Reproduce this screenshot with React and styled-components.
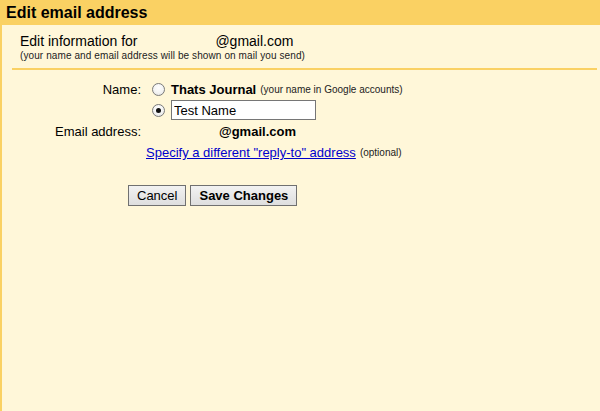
import React, { useState } from 'react';
import styled, { createGlobalStyle } from 'styled-components';

const GlobalStyle = createGlobalStyle`
  html, body {
    margin: 0;
    padding: 0;
    background: #fff7d9;
    font-family: "Liberation Sans", Arial, sans-serif;
    color: #000;
  }
`;

const Page = styled.div`
  width: 600px;
  height: 411px;
  display: flex;
  flex-direction: column;
  background: #fff7d9;
  overflow: hidden;
`;

const TitleBar = styled.div`
  height: 25px;
  flex: none;
  display: flex;
  align-items: center;
  padding-left: 6px;
  background: #fad163;
  font-size: 16px;
  font-weight: bold;
`;

const Body = styled.div`
  flex: 1;
  border-left: 2px solid #fad163;
  padding-top: 8px;
`;

const InfoHead = styled.div`
  padding-left: 18px;
  font-size: 14px;
  line-height: 16px;
`;

const Blank = styled.span`
  display: inline-block;
  width: ${(p) => p.$w}px;
`;

const Note = styled.div`
  font-size: 10px;
  line-height: 12px;
  margin-top: 1px;
  color: #222;
  letter-spacing: 0.1px;
`;

const Divider = styled.div`
  height: 2px;
  margin: 6px 3px 0 10px;
  background: #fad163;
`;

const Form = styled.div`
  display: grid;
  grid-template-columns: 139px 1fr;
  grid-template-rows: 20px 22px 21px 21px;
  column-gap: 5px;
  margin-top: 9px;
  font-size: 13px;
`;

const Label = styled.div`
  display: flex;
  align-items: center;
  justify-content: flex-end;
`;

const Value = styled.div`
  display: flex;
  align-items: center;
`;

const Radio = styled.span`
  width: 11px;
  height: 11px;
  margin: 0 6px 0 6px;
  border: 1px solid #7a7a7a;
  border-radius: 50%;
  background: radial-gradient(circle at 50% 35%, #fff 0%, #f3f3f3 55%, #dcdcdc 100%);
  display: flex;
  align-items: center;
  justify-content: center;
  flex: none;
  cursor: pointer;

  &::after {
    content: '';
    width: 5px;
    height: 5px;
    border-radius: 50%;
    background: ${(p) => (p.$on ? '#111' : 'transparent')};
  }
`;

const Strong = styled.span`
  font-weight: bold;
`;

const Small = styled.span`
  font-size: 10px;
  color: #222;
  margin-left: 4px;
`;

const NameInput = styled.input`
  box-sizing: border-box;
  width: 145px;
  height: 20px;
  border: 1px solid #767676;
  background: #fff;
  padding: 0 2px;
  font: 13px "Liberation Sans", Arial, sans-serif;
  outline: none;
`;

const Link = styled.a`
  color: #0000cc;
  text-decoration: underline;
  cursor: pointer;
`;

const Buttons = styled.div`
  display: flex;
  gap: 4px;
  padding-left: 126px;
  margin-top: 22px;
`;

const Button = styled.button`
  height: 21px;
  padding: 0 8px;
  border: 1px solid #707070;
  border-radius: 0;
  background: linear-gradient(#f2f2f2, #dedede);
  font: ${(p) => (p.$primary ? 'bold' : 'normal')} 13px "Liberation Sans", Arial, sans-serif;
  color: #000;
  cursor: pointer;
`;

export default function App() {
  const [choice, setChoice] = useState('custom');
  const [name, setName] = useState('Test Name');

  return (
    <>
      <GlobalStyle />
      <Page>
        <TitleBar>Edit email address</TitleBar>
        <Body>
          <InfoHead>
            Edit information for <Blank $w={74} />@gmail.com
            <Note>(your name and email address will be shown on mail you send)</Note>
          </InfoHead>
          <Divider />
          <Form>
            <Label>Name:</Label>
            <Value>
              <Radio $on={choice === 'account'} onClick={() => setChoice('account')} />
              <Strong>Thats Journal</Strong>
              <Small>(your name in Google accounts)</Small>
            </Value>
            <div />
            <Value>
              <Radio $on={choice === 'custom'} onClick={() => setChoice('custom')} />
              <NameInput value={name} onChange={(e) => setName(e.target.value)} />
            </Value>
            <Label>Email address:</Label>
            <Value>
              <Blank $w={73} />
              <Strong>@gmail.com</Strong>
            </Value>
            <div />
            <Value>
              <Link>Specify a different "reply-to" address</Link>
              <Small>(optional)</Small>
            </Value>
          </Form>
          <Buttons>
            <Button>Cancel</Button>
            <Button $primary>Save Changes</Button>
          </Buttons>
        </Body>
      </Page>
    </>
  );
}
